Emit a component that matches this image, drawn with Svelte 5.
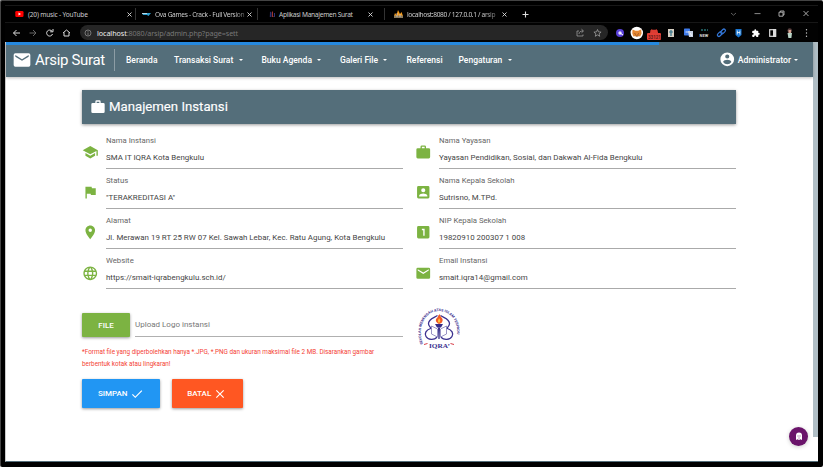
<script>
  const icons = {
    mail: 'M20 4H4a2 2 0 0 0-2 2v12a2 2 0 0 0 2 2h16a2 2 0 0 0 2-2V6a2 2 0 0 0-2-2zm0 4l-8 5-8-5V6l8 5 8-5v2z',
    school: 'M5 13.18v4L12 21l7-3.82v-4L12 17l-7-3.82zM12 3L1 9l11 6 9-4.91V17h2V9L12 3z',
    work: 'M10 2h4a2 2 0 0 1 2 2v2h4a2 2 0 0 1 2 2v11a2 2 0 0 1-2 2H4a2 2 0 0 1-2-2V8a2 2 0 0 1 2-2h4V4a2 2 0 0 1 2-2zm4 4V4h-4v2h4z',
    flag: 'M14.4 6L14 4H5v17h2v-7h5.6l.4 2h7V6z',
    place: 'M12 2C8.13 2 5 5.13 5 9c0 5.25 7 13 7 13s7-7.75 7-13c0-3.87-3.13-7-7-7zm0 9.5a2.5 2.5 0 1 1 0-5 2.5 2.5 0 0 1 0 5z',
    globe: 'M11.99 2C6.47 2 2 6.48 2 12s4.47 10 9.99 10C17.52 22 22 17.52 22 12S17.52 2 11.99 2zm6.93 6h-2.95a15.65 15.65 0 0 0-1.38-3.56A8.03 8.03 0 0 1 18.92 8zM12 4.04c.83 1.2 1.48 2.53 1.91 3.96h-3.82c.43-1.43 1.08-2.76 1.91-3.96zM4.26 14a8.2 8.2 0 0 1 0-4h3.38a16.5 16.5 0 0 0 0 4H4.26zm.82 2h2.95c.32 1.25.78 2.45 1.38 3.56A7.99 7.99 0 0 1 5.08 16zm2.95-8H5.08a7.99 7.99 0 0 1 4.33-3.56A15.65 15.65 0 0 0 8.03 8zM12 19.96A14 14 0 0 1 10.09 16h3.82A14 14 0 0 1 12 19.96zM14.34 14H9.66a14.7 14.7 0 0 1 0-4h4.68a14.6 14.6 0 0 1 0 4zm.25 5.56c.6-1.11 1.06-2.31 1.38-3.56h2.95a8.03 8.03 0 0 1-4.33 3.56zM16.36 14a16.5 16.5 0 0 0 0-4h3.38a8.2 8.2 0 0 1 0 4h-3.38z',
    person: 'M3 5v14a2 2 0 0 0 2 2h14a2 2 0 0 0 2-2V5a2 2 0 0 0-2-2H5a2 2 0 0 0-2 2zm12 4a3 3 0 1 1-6 0 3 3 0 0 1 6 0zm-9 8c0-2 4-3.1 6-3.1s6 1.1 6 3.1v1H6v-1z',
    one: 'M19 3H5a2 2 0 0 0-2 2v14a2 2 0 0 0 2 2h14a2 2 0 0 0 2-2V5a2 2 0 0 0-2-2zm-5 14h-2V9h-2V7h4v10z',
    account: 'M12 2a10 10 0 1 0 0 20 10 10 0 0 0 0-20zm0 3a3 3 0 1 1 0 6 3 3 0 0 1 0-6zm0 14.2a7.2 7.2 0 0 1-6-3.22c.03-1.99 4-3.08 6-3.08s5.97 1.09 6 3.08a7.2 7.2 0 0 1-6 3.22z',
    puzzle: 'M20.5 11H19V7a2 2 0 0 0-2-2h-4V3.500a2.500 2.500 0 0 0-5 0V5H4a2 2 0 0 0-2 2v3.800h1.500a2.700 2.700 0 0 1 0 5.400H2V20a2 2 0 0 0 2 2h3.800v-1.500a2.700 2.700 0 0 1 5.400 0V22H17a2 2 0 0 0 2-2v-4h1.500a2.500 2.500 0 0 0 0-5z',
    check: 'M9 16.170L4.830 12l-1.420 1.410L9 19 21 7l-1.410-1.410z',
    close: 'M19 6.410L17.590 5 12 10.590 6.410 5 5 6.410 10.590 12 5 17.590 6.410 19 12 13.410 17.590 19 19 17.590 13.410 12z'
  };

  const tabs = [
    { title: '(20) music - YouTube', icon: 'yt', width: 131 },
    { title: 'Ova Games - Crack - Full Version', icon: 'ova', width: 122 },
    { title: 'Aplikasi Manajemen Surat', icon: 'app', width: 127 },
    { title: 'localhost:8080 / 127.0.0.1 / arsip', icon: 'pma', width: 127 }
  ];

  const menu = [
    { label: 'Beranda', width: 48 },
    { label: 'Transaksi Surat', width: 87.5, drop: true },
    { label: 'Buku Agenda', width: 78.5, drop: true },
    { label: 'Galeri File', width: 66.5, drop: true },
    { label: 'Referensi', width: 52 },
    { label: 'Pengaturan', width: 60, drop: true }
  ];

  const fields = [
    ['school', 'Nama Instansi', 'SMA IT IQRA Kota Bengkulu'],
    ['work', 'Nama Yayasan', 'Yayasan Pendidikan, Sosial, dan Dakwah Al-Fida Bengkulu'],
    ['flag', 'Status', '"TERAKREDITASI A"'],
    ['person', 'Nama Kepala Sekolah', 'Sutrisno, M.TPd.'],
    ['place', 'Alamat', 'Jl. Merawan 19 RT 25 RW 07 Kel. Sawah Lebar, Kec. Ratu Agung, Kota Bengkulu'],
    ['one', 'NIP Kepala Sekolah', '19820910 200307 1 008'],
    ['globe', 'Website', 'https://smait-iqrabengkulu.sch.id/'],
    ['mail', 'Email Instansi', 'smait.iqra14@gmail.com']
  ];
</script>

{#snippet icon(name, size)}
  <svg class="icon" width={size} height={size} viewBox="0 0 24 24" fill="currentColor"><path d={icons[name]} fill-rule="evenodd" /></svg>
{/snippet}

<div class="window">
  <div class="tabs">
    {#each tabs as tab, i}
      <div class="tab tab{i}" style="width:{tab.width}px">
        <svg class="fav" width="9" height="8" viewBox="0 0 9 8">
          {#if tab.icon === 'yt'}
            <rect x=".3" y="1" width="8.200" height="6" rx="1.300" fill="#f00" /><path d="M3.500 2.600v2.800L6 4z" fill="#fff" />
          {:else if tab.icon === 'ova'}
            <path d="M0 3h9L6.500 6 5 5H1z" fill="#2d9fd0" /><path d="M0 3h5v1H0z" fill="#b9d7e4" />
          {:else if tab.icon === 'app'}
            <path d="M2 1.500l1.500 1v4.500H1.800z" fill="#30306f" /><path d="M4 1l1 1v4l1 1H4z" fill="#a0342e" /><path d="M6 3h1v4H6z" fill="#303478" />
          {:else}
            <path d="M0 6l1-3 1.500 2L4 0l2 4 1.500-2L9 6z" fill="#f79b18" /><path d="M0 5.500h9V8H0z" fill="#8a7b5d" /><path d="M3 3v4M6 4v3" stroke="#ccd" stroke-width=".7" />
          {/if}
        </svg>
        <span class="title">{tab.title}</span>
        <svg class="x" width="5" height="5" viewBox="0 0 5 5"><path d="M.5.5l4 4m0-4l-4 4" stroke="#ddd" stroke-width=".9" /></svg>
      </div>
    {/each}
    <svg class="plus" width="7" height="7" viewBox="0 0 7 7"><path d="M3.500.5v6m-3-3h6" stroke="#ddd" stroke-width="1.100" /></svg>
    <svg class="controls" width="80" height="10" viewBox="0 0 80 10" fill="none" stroke="#aaa" stroke-width=".8">
      <path d="M1 4l2.500 2.200L6 4" stroke="#777" /><path d="M24.500 4.600h6" /><path d="M49 3.200h4v4h-4zM50.300 3V2h3.700v4h-1" stroke="#ccc" /><path d="M73.500 2l5 5m0-5l-5 5" stroke="#ccc" />
    </svg>
  </div>

  <div class="toolbar">
    <svg class="browse" width="62" height="12" viewBox="0 0 62 12" fill="none" stroke="#ddd" stroke-width="1">
      <path d="M8 6H1.500M4.500 3l-3 3 3 3" /><path d="M17.500 6H24M21 3l3 3-3 3" stroke="#666" />
      <path d="M40 4.200A3 3 0 1 0 40.500 7M41 2v2.800h-2.800" /><path d="M51 6l3.500-3 3.500 3M52 5.500V9h5V5.500" />
    </svg>
    <div class="address">
      <svg width="8" height="8" viewBox="0 0 8 8" fill="none" stroke="#999" stroke-width=".7"><circle cx="4" cy="4" r="3" /><path d="M4 3.500V6M4 2v.8" /></svg>
      <span class="url"><b>localhost</b>:8080/arsip/admin.php?page=sett</span>
      <svg class="share" width="27" height="10" viewBox="0 0 27 10" fill="none" stroke="#aaa" stroke-width=".7">
        <path d="M3 3H1v5h6V6.500M3 6c0-2 1.500-3 4-3M5.500 1.200L7.500 3l-2 1.800" /><path d="M21.500 1.500l1 2.400 2.600.2-2 1.700.6 2.500-2.200-1.400-2.200 1.400.6-2.500-2-1.700 2.600-.2z" />
      </svg>
    </div>
    <svg class="ext" width="205" height="16" viewBox="0 0 205 16">
      <circle cx="8" cy="8" r="4" fill="#5940d8" /><circle cx="8" cy="8" r="1.700" fill="#e6dfff" /><path d="M8 8l3 2" stroke="#fff" />
      <circle cx="24.800" cy="8" r="6.200" fill="#fff" /><path d="M20.500 4.500l3 1.300h2.600l3-1.300.5 4-1.500 3-2-.5-1.300.8-1.300-.8-2 .5-1.200-3z" fill="#e58732" /><path d="M22.500 8.500l1.500 1m3-1l-1.500 1m-2 1.500h3" stroke="#763e1a" stroke-width=".7" />
      <path d="M38 8l.5-3h1l-.6-1.200 1.700 1h3l1.600-1-.6 1.200h.8l.7 3z" fill="#dc3c32" /><rect x="35" y="8" width="14" height="7" rx="1" fill="#e23e35" /><text x="36" y="13.700" class="badge">33121</text>
      <rect x="56" y="4" width="6" height="8" fill="#d6cfc3" /><path d="M59 5v6m-2-4h4" stroke="#32728b" stroke-width="1.200" />
      <rect x="72" y="3.500" width="6" height="7" rx=".7" fill="#3f7bea" /><path d="M76 6h5v6h-4z" fill="#c7d2e4" /><path d="M73.500 7h3M78 8l2 3" stroke="#fff" stroke-width=".8" />
      <path d="M89 5h7" stroke="#287174" stroke-width="1.500" stroke-dasharray="2 1" /><text x="87.600" y="11.500" class="new">NEW</text>
      <g fill="none" stroke="#3478da" stroke-width="1.200"><rect x="105" y="7.500" width="5.500" height="3" rx="1.500" transform="rotate(-45 107.800 9)" /><rect x="108.300" y="5" width="5.500" height="3" rx="1.500" transform="rotate(-45 111 6.500)" /></g>
      <path d="M123.500 4h6v6l-3 2.500-3-2.500z" fill="#1976d2" /><path d="M125.300 5.500v4m2.600-4v4m-2.600-2h2.600" stroke="#fff" stroke-width=".8" />
      <g transform="translate(139.500 4) scale(.36)" fill="#fff"><path d={icons.puzzle} /></g>
      <rect x="157.700" y="4.700" width="6" height="6.600" fill="none" stroke="#ddd" stroke-width="1.200" /><path d="M161 4h3v8h-3z" fill="#ddd" />
      <circle cx="177.700" cy="5.500" r="2.200" fill="#5b4140" /><path d="M176.500 5h2.600v3h-2.600z" fill="#d5a392" /><path d="M175.500 8h4.500l-.6 5h-3z" fill="#b9d3c6" />
      <g fill="#ccc"><circle cx="194.500" cy="4.700" r=".7" /><circle cx="194.500" cy="8" r=".7" /><circle cx="194.500" cy="11.300" r=".7" /></g>
    </svg>
  </div>

  <div class="page">
    <div class="main">
      <div class="loading"></div>
      <nav>
        <div class="brand">{@render icon('mail', 20)}<span>Arsip Surat</span></div>
        <div class="menu">
          {#each menu as item}
            <a href="#top" style="width:{item.width}px">{item.label}{#if item.drop}<i class="caret"></i>{/if}</a>
          {/each}
        </div>
        <div class="user">{@render icon('account', 16.5)}<span>Administrator</span><i class="caret"></i></div>
      </nav>

      <div class="content">
        <header>{@render icon('work', 16)}<h1>Manajemen Instansi</h1></header>
        <div class="fields">
          {#each fields as [name, label, value]}
            <div class="field">
              <span class="prefix">{@render icon(name, 16.5)}</span>
              <div class="entry"><label for={name}>{label}</label><div class="value" id={name}>{value}</div></div>
            </div>
          {/each}
        </div>
        <div class="lower">
          <div class="upload">
            <div class="filerow"><button class="file">FILE</button><div class="path">Upload Logo instansi</div></div>
            <p>*Format file yang diperbolehkan hanya *.JPG, *.PNG dan ukuran maksimal file 2 MB. Disarankan gambar<br />berbentuk kotak atau lingkaran!</p>
          </div>
          <svg class="logo" width="42" height="44" viewBox="0 0 42 44">
            <defs><path id="arc" d="M5 38C1.500 29 2 17 9 10c6-6.500 18-6.500 24 0 7 7 7.500 19 4 28" /></defs>
            <text class="ring"><textPath href="#arc" textLength="76" lengthAdjust="spacingAndGlyphs">SEKOLAH MENENGAH ATAS ISLAM TERPADU</textPath></text>
            <g fill="none" stroke="#3b318f" stroke-width="1.300">
              <path d="M19.500 9.500C16 12 10.500 13 10.500 17.500c0 3 2.200 3.200 2.200 5C8 24 6.200 27.500 8 30.500c2 3.500 8 4 11 .8M22.500 9.500c3.500 2.500 9 3.500 9 8 0 3-2.200 3.200-2.200 5 4.700 1.500 6.500 5 4.700 8-2 3.500-8 4-11 .8" />
              <path d="M13.500 20l6 3v8l-6-3zM28.500 20l-6 3v8l6-3z" stroke-width=".7" stroke="#7069ae" />
            </g>
            <path d="M21 18c-4-2-4-5-1-7-.2-1.500 1-2 2-3-.4 3 3.500 4 2.500 7-.5 1.800-1.500 2.500-3.500 3z" fill="#f15b25" /><path d="M21 17c-2-2-.5-3 0-5 1.500 2 2 3.500 0 5z" fill="#ffc13a" />
            <path d="M17 18h8l-2 3.500h-4z" fill="#342b87" /><path d="M20 21.500h2L21.600 33h-1.200z" fill="#342b87" /><path d="M6 38.500l3.500-1m26.500 1l-3.500-1" stroke="#d83d48" />
            <text x="11" y="42" class="iqra" textLength="21" lengthAdjust="spacingAndGlyphs">IQRA’</text>
          </svg>
        </div>
        <div class="actions">
          <button class="save">SIMPAN{@render icon('check', 14)}</button>
          <button class="cancel">BATAL{@render icon('close', 14)}</button>
        </div>
      </div>
    </div>
    <div class="scroll"></div>
    <div class="ghost"><svg width="8" height="9" viewBox="0 0 8 9"><path d="M1 8V3.500a3 3 0 0 1 6 0V8L5.500 7.300 4 8l-1.500-.7z" fill="#fff" /><path d="M3 3.500v1m2-1v1M3.500 6h1" stroke="#6b146b" stroke-width=".8" /></svg></div>
  </div>
</div>

<style>
  :global(body) { background: #fff; overflow: hidden; }
  * { box-sizing: border-box; }
  svg { display: block; flex: none; }
  .window { width: 823px; height: 467px; background: #000; border-top: 1px solid #444; border-left: 1px solid #444; border-radius: 2px; padding: 4px 5px 5px 4px; font-family: Roboto, sans-serif; display: flex; flex-direction: column; }
  .tabs { height: 18px; border-top: 1px solid #181818; border-bottom: 1px solid #171717; display: flex; align-items: center; color: #ccc; font: 6.600px "Noto Sans", sans-serif; }
  .tab { display: flex; align-items: center; padding: 0 3px 0 10px; height: 12px; border-right: 1px solid #333; flex: none; }
  .tab1 { padding: 0 5px 0 6px; }
  .tab2 { padding: 0 11px 0 10px; }
  .tab3 { border: 0; padding: 0 5px 0 9px; }
  .title { margin-left: 4px; white-space: nowrap; flex: 1; letter-spacing: -.2px; }
  .tab1 .title { letter-spacing: -.32px; mask-image: linear-gradient(90deg, #000 85%, #0004); }
  .tab2 .title { margin-left: 2px; letter-spacing: -.28px; }
  .tab3 .title { letter-spacing: -.34px; mask-image: linear-gradient(90deg, #000 80%, #0003); }
  .plus { margin-left: 10px; }
  .controls { margin-left: auto; margin-right: 8px; }
  .toolbar { height: 19px; background: #020202; display: flex; align-items: center; padding-left: 7px; flex: none; }
  .address { margin-left: 6px; width: 528px; height: 15px; border-radius: 8px; background: #262626; display: flex; align-items: center; padding: 0 5px 0 4px; }
  .url { color: #777; font: 7.200px "Noto Sans", sans-serif; margin-left: 5px; letter-spacing: -.08px; }
  .url b { color: #eee; font-weight: 400; }
  .share { margin-left: auto; }
  .ext { margin-left: 4px; }
  .badge { font: bold 4.500px Roboto, sans-serif; fill: #671b18; }
  .new { font: bold 4px Roboto, sans-serif; fill: #ddd; }
  .page { position: relative; flex: 1; min-height: 0; background: #fff; display: flex; border-bottom: 1px solid #546e7a; border-left: 1px solid #ccc; }
  .main { position: relative; flex: 1; }
  .loading { position: absolute; left: 0; top: 0; width: 653px; height: 3px; background: #2589df; }
  .scroll { width: 5px; height: 395px; background: #b0bec5; }
  nav { height: 35px; background: #546e7a; color: #fff; display: flex; align-items: center; box-shadow: 0 1px 3px #0004; }
  .brand { width: 109px; height: 22px; border-right: 1px solid #8c9da5; display: flex; align-items: center; padding-left: 6px; font-size: 15px; }
  .brand span { margin-left: 3px; white-space: nowrap; letter-spacing: -.32px; }
  .menu { display: flex; margin-left: 11px; font-size: 8.500px; font-weight: 500; }
  .menu a { color: inherit; text-decoration: none; white-space: nowrap; display: flex; align-items: center; flex: none; }
  .caret { display: inline-block; border: 2px solid transparent; border-top-color: currentColor; border-bottom: 0; margin-left: 5.500px; }
  .user { display: flex; align-items: center; margin-left: auto; margin-right: 15px; font-size: 8.700px; font-weight: 500; }
  .user span { margin-left: 2px; }
  .user .caret { margin-left: 3px; }
  .content { width: 654px; margin: 12.500px 0 0 76px; }
  header { height: 34px; background: #546e7a; color: #fff; display: flex; align-items: center; padding-left: 8px; box-shadow: 0 1px 3px #0006; }
  h1 { font-size: 13.200px; font-weight: 400; margin: 0 0 0 3px; -webkit-text-stroke: .15px #fff; }
  .fields { display: grid; grid-template-columns: 321px 321px; column-gap: 12px; margin-top: 5px; }
  .field { height: 40.200px; display: flex; }
  .prefix { width: 24px; color: #7cb342; padding-top: 15.500px; }
  .entry { flex: 1; border-bottom: 1px solid #aaa; height: 40px; color: #444; font-size: 7.900px; white-space: nowrap; }
  label { display: block; height: 17px; margin-top: 7px; line-height: 10px; color: #666; font-size: 7.750px; }
  .value { line-height: 10px; letter-spacing: .02px; }
  .lower { display: flex; margin-top: 18px; height: 67px; }
  .upload { width: 321px; padding-top: 6px; }
  .filerow { display: flex; gap: 5px; }
  button { border: 0; color: #fff; font: 500 8px Roboto, sans-serif; border-radius: 1px; box-shadow: 0 1px 3px #0006; display: flex; align-items: center; justify-content: center; padding: 0; }
  .file { width: 48px; height: 24px; background: #7cb342; }
  .path { flex: 1; border-bottom: 1px solid #b0b0b0; color: #777; font-size: 8px; line-height: 23px; }
  p { color: #f44336; font-size: 6.350px; line-height: 12px; margin: 8.500px 0 0; white-space: nowrap; }
  .logo { margin-left: 15px; margin-top: -1px; }
  .ring { font: bold 3.500px Roboto, sans-serif; fill: #3b318f; }
  .iqra { font: bold 7px "Liberation Serif", serif; fill: #3b318f; }
  .actions { display: flex; gap: 12px; margin-top: 5px; }
  .actions button { height: 29px; gap: 2px; }
  .save { width: 77.500px; background: #2196f3; }
  .cancel { width: 71.500px; background: #ff5722; }
  .ghost { position: absolute; right: 10px; bottom: 15px; width: 19px; height: 19px; border-radius: 50%; background: #6b146b; display: flex; align-items: center; justify-content: center; box-shadow: 0 1px 4px #0003; }
</style>
